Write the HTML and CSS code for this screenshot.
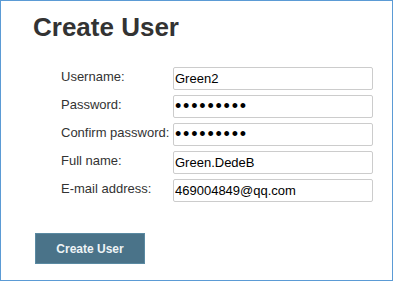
FILE: index.html
```html
<!DOCTYPE html>
<html lang="en">
<head>
  <meta charset="UTF-8">
  <title>Create User</title>
  <link rel="stylesheet" href="styles.css">
</head>
<body>
  <div class="frame">
    <h1>Create User</h1>
    <form class="user-form">
      <div class="row">
        <label for="username">Username:</label>
        <input type="text" id="username" value="Green2">
      </div>
      <div class="row">
        <label for="password">Password:</label>
        <input type="password" id="password" class="secret" value="123456789">
      </div>
      <div class="row">
        <label for="confirm">Confirm password:</label>
        <input type="password" id="confirm" class="secret" value="123456789">
      </div>
      <div class="row">
        <label for="fullname">Full name:</label>
        <input type="text" id="fullname" value="Green.DedeB">
      </div>
      <div class="row">
        <label for="email">E-mail address:</label>
        <input type="text" id="email" value="469004849@qq.com">
      </div>
      <button type="button" class="submit">Create User</button>
    </form>
  </div>
</body>
</html>
```

FILE: styles.css
```css
* { box-sizing: border-box; }

body {
  margin: 0;
  padding: 0;
  background: #ffffff;
  font-family: "Liberation Sans", Arial, sans-serif;
  color: #333333;
}

.frame {
  width: 393px;
  height: 281px;
  border: 1px solid #5b9bd5;
  padding: 11px 0 0 32px;
}

h1 {
  margin: 0;
  font-size: 26px;
  line-height: 30px;
  font-weight: bold;
  color: #333333;
}

.user-form {
  margin-top: 25px;
  display: flex;
  flex-direction: column;
}

.row {
  display: flex;
  align-items: flex-start;
  margin-left: 28px;
  margin-bottom: 5px;
}

.row label {
  width: 112px;
  padding-top: 2px;
  font-size: 13px;
  line-height: 15px;
  color: #333333;
}

.row input {
  width: 200px;
  height: 23px;
  margin: 0;
  padding: 0 2px 0 1px;
  border: 1px solid #cccccc;
  border-radius: 2px;
  font-family: "Liberation Sans", Arial, sans-serif;
  font-size: 13px;
  color: #000000;
  background: #ffffff;
  outline: none;
}

.row input.secret {
  font-size: 18px;
  letter-spacing: 1.8px;
}

.submit {
  align-self: flex-start;
  margin-top: 26px;
  margin-left: 2px;
  width: 110px;
  height: 31px;
  background: #4a7389;
  border: 1px solid #5a8aa2;
  color: #eef3f6;
  font-family: "Liberation Sans", Arial, sans-serif;
  font-size: 12px;
  font-weight: bold;
  cursor: pointer;
}
```
